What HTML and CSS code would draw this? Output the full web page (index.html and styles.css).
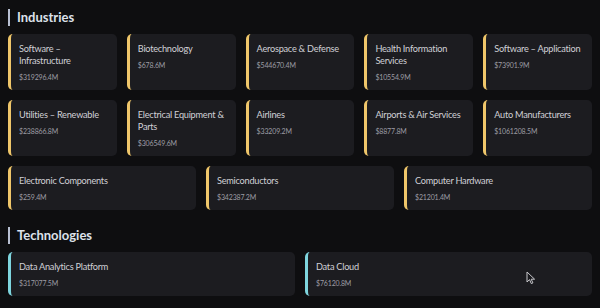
FILE: index.html
```html
<!DOCTYPE html>
<html lang="en">
<head>
    <meta charset="UTF-8">
    <meta name="viewport" content="width=device-width, initial-scale=1.0">
    <title>Sectors</title>
    <link rel="stylesheet" href="styles.css">
</head>
<body>
    <main class="page">
        <section class="group">
            <h2 class="group-title">Industries</h2>
            <div class="cards">
                <div class="card"><p class="card-name">Software – Infrastructure</p><p class="card-value">$319296.4M</p></div>
                <div class="card"><p class="card-name">Biotechnology</p><p class="card-value">$678.6M</p></div>
                <div class="card"><p class="card-name">Aerospace &amp; Defense</p><p class="card-value">$544670.4M</p></div>
                <div class="card"><p class="card-name">Health Information Services</p><p class="card-value">$10554.9M</p></div>
                <div class="card"><p class="card-name">Software – Application</p><p class="card-value">$73901.9M</p></div>
                <div class="card"><p class="card-name">Utilities – Renewable</p><p class="card-value">$238866.8M</p></div>
                <div class="card"><p class="card-name">Electrical Equipment &amp; Parts</p><p class="card-value">$306549.6M</p></div>
                <div class="card"><p class="card-name">Airlines</p><p class="card-value">$33209.2M</p></div>
                <div class="card"><p class="card-name">Airports &amp; Air Services</p><p class="card-value">$8877.8M</p></div>
                <div class="card"><p class="card-name">Auto Manufacturers</p><p class="card-value">$1061208.5M</p></div>
                <div class="card"><p class="card-name">Electronic Components</p><p class="card-value">$259.4M</p></div>
                <div class="card"><p class="card-name">Semiconductors</p><p class="card-value">$342387.2M</p></div>
                <div class="card"><p class="card-name">Computer Hardware</p><p class="card-value">$21201.4M</p></div>
            </div>
        </section>

        <section class="group">
            <h2 class="group-title">Technologies</h2>
            <div class="cards">
                <div class="card card-tech"><p class="card-name">Data Analytics Platform</p><p class="card-value">$317077.5M</p></div>
                <div class="card card-tech"><p class="card-name">Data Cloud</p><p class="card-value">$76120.8M</p></div>
            </div>
        </section>
    </main>

    <svg class="cursor" width="10" height="14" viewBox="0 0 10 14">
        <path d="M1 1 L1 11 L3.5 8.6 L5.3 12.6 L6.9 11.9 L5.2 8.2 L8.6 8.2 Z" fill="#1a1a1e" stroke="#c8c8cc" stroke-width="1"/>
    </svg>
</body>
</html>
```

FILE: styles.css
```css
body {
    margin: 0;
    padding: 0;
    background-color: #0e0e10;
    font-family: Lato, "Open Sans", sans-serif;
    color: #d4d4da;
}

.page {
    padding: 9px 8px 0 8px;
}

.group {
    margin-bottom: 17px;
}

.group-title {
    margin: 0 0 8px 0;
    padding-left: 7px;
    border-left: 2px solid #b8c0d2;
    font-size: 13px;
    line-height: 17px;
    font-weight: 700;
    color: #dde1ea;
}

.cards {
    display: flex;
    flex-wrap: wrap;
    gap: 10px;
}

.card {
    flex: 1 1 100px;
    box-sizing: border-box;
    background-color: #1c1c20;
    border-left: 3px solid #efc66a;
    border-radius: 5px;
    padding: 9px 6px 7px 8px;
}

.card-tech {
    border-left-color: #7ed5de;
}

.card-name {
    margin: 0 0 4px 0;
    font-size: 9.2px;
    line-height: 12px;
    letter-spacing: -0.25px;
    color: #d0d0d6;
}

.card-value {
    margin: 0;
    font-size: 7px;
    line-height: 12px;
    letter-spacing: -0.15px;
    color: #9c9ca4;
}

.cursor {
    position: absolute;
    left: 526px;
    top: 271px;
}
```
